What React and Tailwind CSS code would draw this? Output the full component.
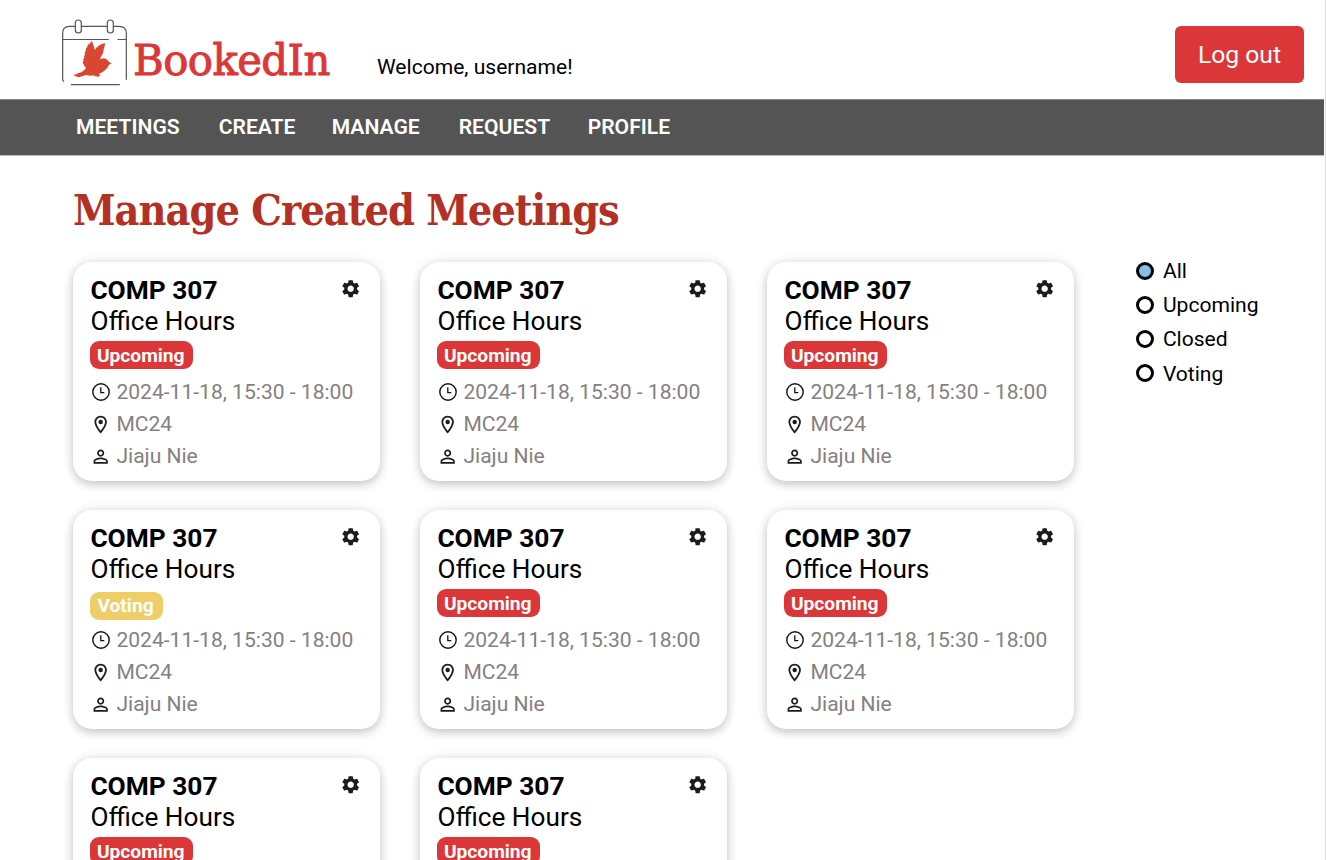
import { MdSettings, MdOutlineLocationOn, MdPersonOutline } from "react-icons/md";

const NAV = [
  { label: "MEETINGS", cls: "w-[142.7px]" },
  { label: "CREATE", cls: "w-[113px]" },
  { label: "MANAGE", cls: "w-[127px]" },
  { label: "REQUEST", cls: "w-[129px]" },
  { label: "PROFILE", cls: "" },
];

const STATUSES = ["Upcoming", "Upcoming", "Upcoming", "Voting", "Upcoming", "Upcoming", "Upcoming", "Upcoming"];

const FILTERS = ["All", "Upcoming", "Closed", "Voting"];

function Logo() {
  return (
    <svg viewBox="30 24 210 210" className="h-[70px] w-[70px] shrink-0" fill="none">
      <g stroke="#555" strokeWidth="3.6" strokeLinecap="round">
        <path d="M41 214 Q38 212 38 206 V70 Q38 49 58 49 H76" />
        <path d="M94 49 H172" />
        <path d="M190 49 H207 Q229 49 229 70 V208" />
        <path d="M38 88.500 H175 M204 88.500 H229" />
        <path d="M64 224 H208" />
        <rect x="76" y="30" width="18" height="39" rx="9" />
        <rect x="172" y="30" width="18" height="39" rx="9" />
      </g>
      <path
        fill="#d94632"
        d="M126 93 L129 103 L132 110 L134 121 L138 114 L143 110 L149 105 L156 102 L165 99 L164 109 L161 118 L160 127 L156 135 L152 142 L151 148 L159 145 L167 146 L173 150 L176 155 L185 160 L177 164 L172 173 L165 181 L158 186 L150 190 L147 194 L153 198 L146 198 L143 203 L139 197 L133 200 L133 196 L120 197 L109 195 L100 197 L89 201 L79 202 L81 198 L72 199 L73 195 L84 190 L94 187 L103 180 L108 174 L103 168 L101 163 L97 157 L101 154 L99 148 L103 145 L102 138 L105 135 L104 128 L107 123 L108 114 L112 111 L113 105 L118 101 Z"
      />
    </svg>
  );
}

function ClockIcon() {
  return (
    <svg viewBox="0 0 20 20" className="ml-[1.500px] size-5" fill="none" stroke="#111">
      <circle cx="10" cy="10" r="8.200" strokeWidth="1.400" />
      <path d="M9.800 5.300V10.700H13.300" strokeWidth="1.300" />
    </svg>
  );
}

function Detail({ icon, children }) {
  return (
    <div className="flex h-8 items-center">
      <span className="mr-[6px] flex w-5 shrink-0 justify-center text-[21.330px] text-[#1d1b20] [&>svg]:shrink-0">{icon}</span>
      <span className="text-[21.070px] leading-8 whitespace-nowrap text-[#857f7f]">{children}</span>
    </div>
  );
}

function Card({ status }) {
  const voting = status === "Voting";
  return (
    <article className="h-[219px] rounded-[19px] bg-white pt-[13px] pl-[17px] shadow-[0_4px_10px_rgba(0,0,0,0.17),0_0_12px_rgba(0,0,0,0.1)]">
      <div className="flex justify-between pr-[19px]">
        <h2 className="text-[26.300px] leading-[31px] font-bold">COMP 307</h2>
        <MdSettings className="mt-[3px] text-[21.330px] text-[#1d1b20]" />
      </div>
      <p className="text-[26.200px] leading-[30px]">Office Hours</p>
      <div className={voting ? "flex h-10 pt-[7.500px]" : "flex h-10 pt-[5px]"}>
        <span
          className={
            voting
              ? "flex h-7 w-[73px] items-center rounded-[9px] bg-[#edce69] pt-px pl-[7px] text-[19.200px] font-bold text-white"
              : "flex h-7 w-[103px] items-center rounded-[9px] bg-[#db3739] pt-px pl-[6.500px] text-[19.200px] font-bold text-white"
          }
        >
          {status}
        </span>
      </div>
      <Detail icon={<ClockIcon />}>2024-11-18, 15:30 - 18:00</Detail>
      <Detail icon={<MdOutlineLocationOn />}>MC24</Detail>
      <Detail icon={<MdPersonOutline />}>Jiaju Nie</Detail>
    </article>
  );
}

export default function App() {
  return (
    <div className="h-[860px] w-[1326px] overflow-hidden border-r border-[#d9d9d9] bg-white font-['Roboto',sans-serif] text-black">
      <header className="flex h-[99px] items-start pr-[21px] pl-[60px]">
        <div className="mt-[18px] flex w-[317px]">
          <Logo />
          <span className="ml-[3px] origin-left scale-x-[1.08] font-['DejaVu_Serif_Condensed','DejaVu_Serif',serif] text-[43px] leading-[84px] tracking-[-0.5px] text-[#db3739] [-webkit-text-stroke:0.9px_#db3739] [font-stretch:condensed]">
            BookedIn
          </span>
        </div>
        <p className="mt-[51px] text-[21.070px] leading-8">Welcome, username!</p>
        <button className="mt-[26px] ml-auto h-[57px] w-[129px] rounded-md bg-[#db3739] pt-px text-[24.700px] text-white">Log out</button>
      </header>
      <nav className="mr-px flex h-[57px] items-center border-t border-b border-t-[#868686] border-b-[#bdbdbd] bg-[#545454] pb-0.5 pl-[76px] text-[21.100px] font-semibold text-white">
        {NAV.map((item) => (
          <a key={item.label} className={item.cls}>
            {item.label}
          </a>
        ))}
      </nav>
      <main className="pl-[73.400px]">
        <h1 className="h-[106.400px] w-fit origin-left scale-x-[1.007] pt-[22px] font-['DejaVu_Serif_Condensed','DejaVu_Serif',serif] text-[42.500px] leading-[64px] font-bold tracking-[-1px] whitespace-nowrap text-[#b23024] [font-stretch:condensed]">
          Manage Created Meetings
        </h1>
        <div className="flex">
          <section className="grid w-[1001px] shrink-0 grid-cols-3 gap-x-10 gap-y-[29px]">
            {STATUSES.map((status, i) => (
              <Card key={i} status={status} />
            ))}
          </section>
          <aside className="ml-[61.500px]">
            {FILTERS.map((name, i) => (
              <label key={name} className={i === 0 ? "-mt-[8.500px] flex h-[34.130px] items-center" : "flex h-[34.130px] items-center"}>
                <span
                  className={
                    i === 0
                      ? "mr-[9px] size-[18px] rounded-full border-3 border-black bg-[#84bfe9]"
                      : "mr-[9px] size-[18px] rounded-full border-3 border-black"
                  }
                />
                <span className="text-[21.070px]">{name}</span>
              </label>
            ))}
          </aside>
        </div>
      </main>
    </div>
  );
}
